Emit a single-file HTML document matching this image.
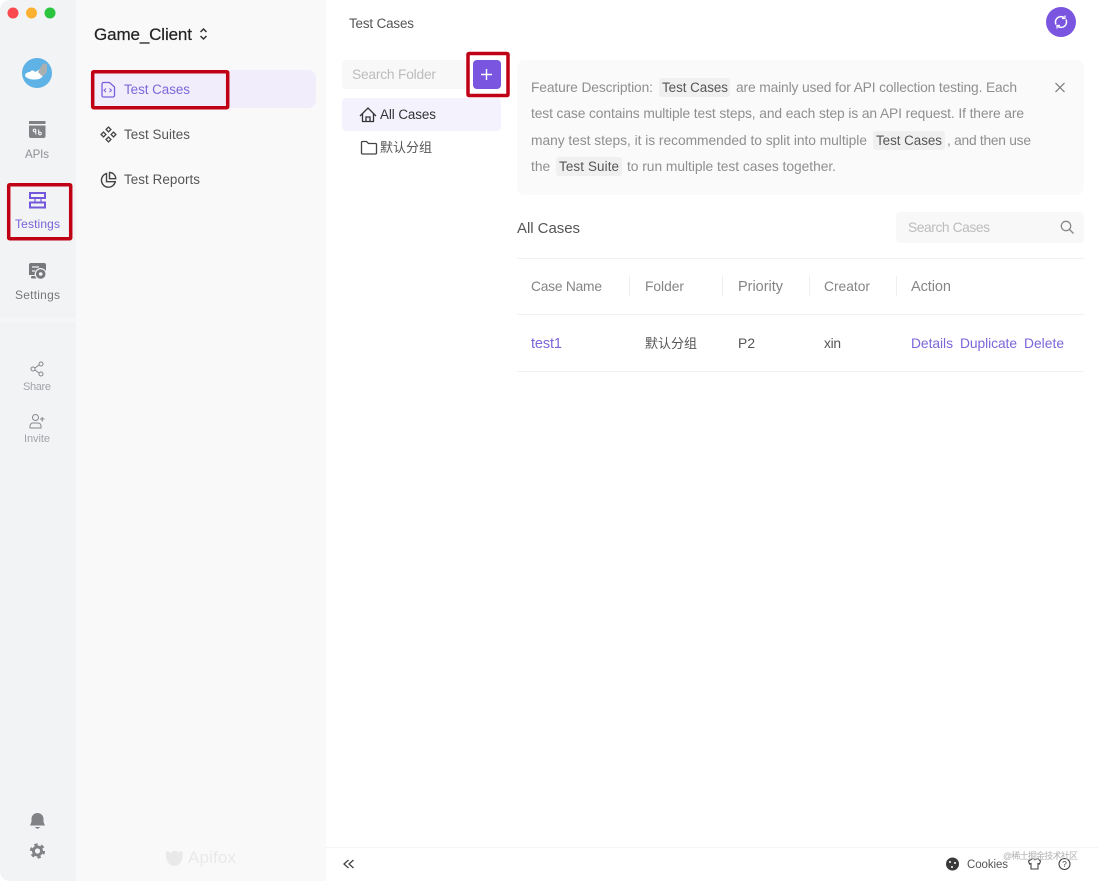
<!DOCTYPE html>
<html>
<head>
<meta charset="utf-8">
<style>
html,body{margin:0;padding:0;background:#fff;width:1098px;height:881px;overflow:hidden}
svg{display:block;filter:blur(0.35px)}
text{font-family:"Liberation Sans","Noto Sans CJK SC",sans-serif;font-size:13.8px}
.s{font-size:13.4px}
</style>
</head>
<body>
<svg width="1098" height="881" viewBox="0 0 1098 881" xmlns="http://www.w3.org/2000/svg">
<rect width="1098" height="881" fill="#fff"/>
<path d="M10 0H76V881H10a10 10 0 0 1-10-10V10A10 10 0 0 1 10 0Z" fill="#f1f3f5"/>
<rect x="0" y="318" width="76" height="4" fill="#f4f6f7"/>
<rect x="76" y="0" width="250" height="881" fill="#f9f9fa"/>

<circle cx="13" cy="13" r="5.5" fill="#fb4a4d"/>
<circle cx="31.5" cy="13" r="5.5" fill="#fcb02f"/>
<circle cx="50" cy="13" r="5.5" fill="#2ac43f"/>

<circle cx="37" cy="73" r="15" fill="#5fb2e6"/>
<path d="M25 76c0-3 3-4 5-4 1-2 4-2 5 0 2-1 4-2 6-4l3 3c1 3-2 7-5 8-4 1-11 1-14-3Z" fill="#fff"/>
<path d="M38 72l4-7c1-2 4-2 5 0v6c-1 3-3 5-5 5-1-1-2-2-4-4Z" fill="#a9aeb0"/>

<path d="M29 121h16.500v3H29Z" fill="#7f8184"/>
<path d="M29 125.500h16.500v10.500a2 2 0 0 1-2 2H31a2 2 0 0 1-2-2Z" fill="#7f8184"/>
<g fill="none" stroke="#f1f3f5" stroke-width="1.100">
<circle cx="34.500" cy="130.500" r="1.300"/><path d="M35.800 130.500v4"/>
<circle cx="40" cy="133.500" r="1.300"/><path d="M38.700 133.500v-4"/>
</g>
<text x="25" y="158" textLength="24" style="font-size:11.500px" fill="#8e9094">APIs</text>

<g fill="none" stroke="#7458dc" stroke-width="2">
<rect x="30" y="193" width="15" height="5"/>
<rect x="30" y="202.500" width="15" height="5"/>
<path d="M35 198v4.500M41 198v4.500" stroke-width="1.200"/>
</g>
<text x="15" y="228" textLength="45" style="font-size:12px" fill="#7a62d8">Testings</text>

<path d="M31 263h13a2 2 0 0 1 2 2v10h-17v-10a2 2 0 0 1 2-2Z" fill="#76787b"/>
<rect x="31" y="276" width="6" height="2.500" rx="1" fill="#76787b"/>
<circle cx="40.700" cy="274" r="6" fill="#f1f3f5"/>
<circle cx="40.700" cy="274" r="4.800" fill="#76787b"/><circle cx="40.700" cy="274" r="1.800" fill="#f1f3f5"/>
<path d="M32 267h7M32 271h3" stroke="#f1f3f5" stroke-width="1.300"/>
<text x="15" y="299" textLength="45" style="font-size:12px" fill="#76787b">Settings</text>

<g fill="none" stroke="#85878b" stroke-width="1">
<circle cx="41" cy="364" r="2"/><circle cx="33" cy="369" r="2"/><circle cx="41" cy="374" r="2"/>
<path d="M35 368l4-3M35 370l4 3"/>
</g>
<text x="23" y="390" textLength="28" style="font-size:11px" fill="#a2a4a8">Share</text>
<g fill="none" stroke="#85878b" stroke-width="1">
<circle cx="35.500" cy="417.500" r="3"/>
<path d="M30 428v-2a3 3 0 0 1 3-3h5a3 3 0 0 1 3 3v2Z"/>
<path d="M40 419h4.500M42.200 417v4.500"/>
</g>
<text x="24" y="442" textLength="26" style="font-size:11px" fill="#a2a4a8">Invite</text>

<path d="M37.500 813c3.500 0 6 2.500 6 6v3l1.500 3.500H30l1.500-3.500v-3c0-3.500 2.500-6 6-6Z" fill="#808286"/>
<path d="M34.500 827h6l-3 2Z" fill="#808286"/>
<circle cx="37.500" cy="851" r="5.500" fill="#808286"/>
<circle cx="37.500" cy="851" r="6.500" fill="none" stroke="#808286" stroke-width="2.200" stroke-dasharray="3.400 3.400"/>
<circle cx="37.500" cy="851" r="2.600" fill="#f1f3f5"/>

<text x="94" y="40" textLength="98" style="font-size:17px" fill="#222" stroke="#222" stroke-width="0.200">Game_Client</text>
<path d="M200.500 32l3-3 3 3M200.500 36l3 3 3-3" fill="none" stroke="#333" stroke-width="1.500"/>

<rect x="90" y="70" width="226" height="38" rx="8" fill="#f1edfb"/>
<path d="M103.500 82.500h6l5 4.500v8.500a1.500 1.500 0 0 1-1.500 1.500h-9.500a1.500 1.500 0 0 1-1.500-1.500v-11.500a1.500 1.500 0 0 1 1.500-1.500Z" fill="none" stroke="#7a5fdc" stroke-width="1.300"/>
<path d="M106 88.500l-2 1.800 2 1.800M109.500 88.500l2 1.800-2 1.800" fill="none" stroke="#7a5fdc" stroke-width="1"/>
<text class="s" x="124" y="94" textLength="66" fill="#7d66d9">Test Cases</text>

<g fill="none" stroke="#444" stroke-width="1.300">
<rect x="106.800" y="127.800" width="3.400" height="3.400" transform="rotate(45 108.500 129.500)"/>
<rect x="106.800" y="137.800" width="3.400" height="3.400" transform="rotate(45 108.500 139.500)"/>
<rect x="101.800" y="132.800" width="3.400" height="3.400" transform="rotate(45 103.500 134.500)"/>
<rect x="111.800" y="132.800" width="3.400" height="3.400" transform="rotate(45 113.500 134.500)"/>
</g>
<text class="s" x="124" y="139" textLength="66" fill="#555">Test Suites</text>

<g fill="none" stroke="#444" stroke-width="1.400">
<path d="M106.500 173.500a7 7 0 1 0 8.800 8.200h-8.800Z"/>
<path d="M109.500 172.500a6.200 6.200 0 0 1 6.200 6.200h-6.200Z"/>
</g>
<text class="s" x="124" y="184" textLength="76" fill="#555">Test Reports</text>

<text class="s" x="349" y="28" textLength="65" fill="#555">Test Cases</text>
<circle cx="1061" cy="22" r="15" fill="#7a55e0"/>
<g fill="none" stroke="#fff" stroke-width="1.500">
<path d="M1056 24.500a5.500 5.500 0 0 1 8-7"/><path d="M1066 19.500a5.500 5.500 0 0 1-8 7"/>
<path d="M1065 15.500v3h-3M1057 28.500v-3h3" stroke-width="1.200"/>
</g>

<rect x="342" y="60" width="126" height="29" rx="3" fill="#f8f8f8"/>
<text x="352" y="79" textLength="84" fill="#bcbcbc">Search Folder</text>
<rect x="473" y="60" width="28" height="29" rx="4" fill="#7a55e0"/>
<path d="M486.500 69v11M481 74.500h11" stroke="#fff" stroke-width="1.400"/>

<rect x="342" y="98" width="159" height="33" rx="4" fill="#f4f2fd"/>
<path d="M360 116l8-8 8 8M362.500 114v7.500h11V114M366 121.500v-4.500h4v4.500" fill="none" stroke="#333" stroke-width="1.300"/>
<text class="s" x="380" y="119" textLength="56" fill="#333">All Cases</text>
<path d="M361.500 142.500a1 1 0 0 1 1-1h4l2 2h7a1 1 0 0 1 1 1v8.500a1 1 0 0 1-1 1h-13a1 1 0 0 1-1-1Z" fill="none" stroke="#444" stroke-width="1.300"/>
<text x="380" y="152" textLength="52" style="font-size:13px" fill="#555">默认分组</text>

<rect x="517" y="60" width="567" height="135" rx="8" fill="#fafafa"/>
<g fill="#8f8f8f">
<text x="531" y="92" textLength="122">Feature Description:</text>
<text x="736" y="92" textLength="281">are mainly used for API collection testing. Each</text>
<text x="531" y="118" textLength="493">test case contains multiple test steps, and each step is an API request. If there are</text>
<text x="531" y="145" textLength="336">many test steps, it is recommended to split into multiple</text>
<text x="947" y="145" textLength="84">, and then use</text>
<text x="531" y="171">the</text>
<text x="627" y="171" textLength="209">to run multiple test cases together.</text>
</g>
<rect x="659" y="78" width="71" height="19" rx="3" fill="#f0f0f0"/>
<rect x="873" y="131" width="72" height="19" rx="3" fill="#f0f0f0"/>
<rect x="556" y="157" width="66" height="19" rx="3" fill="#f0f0f0"/>
<g fill="#555">
<text class="s" x="662" y="92" textLength="66">Test Cases</text>
<text class="s" x="876" y="145" textLength="66">Test Cases</text>
<text class="s" x="559" y="171" textLength="60">Test Suite</text>
</g>
<path d="M1055.500 83l9 9M1064.500 83l-9 9" stroke="#777" stroke-width="1.200"/>

<text x="517" y="233" textLength="63" style="font-size:15px" fill="#555">All Cases</text>
<rect x="896" y="212" width="188" height="31" rx="4" fill="#f8f8f8"/>
<text x="908" y="232" textLength="82" fill="#bcbcbc">Search Cases</text>
<circle cx="1066" cy="226" r="4.700" fill="none" stroke="#888" stroke-width="1.300"/>
<path d="M1069.500 229.500l4 4" stroke="#888" stroke-width="1.300"/>

<g fill="#f2f2f2">
<rect x="517" y="258" width="567" height="1"/>
<rect x="517" y="314" width="567" height="1"/>
<rect x="517" y="371" width="567" height="1"/>
</g>
<g fill="#efefef">
<rect x="629" y="276" width="1" height="20"/>
<rect x="722" y="276" width="1" height="20"/>
<rect x="809" y="276" width="1" height="20"/>
<rect x="896" y="276" width="1" height="20"/>
</g>
<g fill="#858585">
<text x="531" y="291" textLength="71">Case Name</text>
<text x="645" y="291" textLength="39">Folder</text>
<text x="738" y="291" textLength="45" style="font-size:14.500px">Priority</text>
<text x="824" y="291" textLength="46">Creator</text>
<text x="911" y="291" textLength="40" style="font-size:14.500px">Action</text>
</g>
<text x="531" y="348" textLength="31" style="font-size:14.500px" fill="#7d66d9">test1</text>
<text x="645" y="348" textLength="52" style="font-size:13px" fill="#555">默认分组</text>
<text x="738" y="348" textLength="17" fill="#555">P2</text>
<text x="824" y="348" textLength="17" fill="#555">xin</text>
<g fill="#7d66d9">
<text x="911" y="348" textLength="42">Details</text>
<text x="960" y="348" textLength="57">Duplicate</text>
<text x="1024" y="348" textLength="40">Delete</text>
</g>

<rect x="326" y="847" width="772" height="1" fill="#f5f5f5"/>
<path d="M348.500 860l-4.500 4 4.500 4M353.500 860l-4.500 4 4.500 4" fill="none" stroke="#444" stroke-width="1.300"/>
<path d="M166.500 851c1 0 3 .5 4 2 3-3 7-3 8 0 1-1.500 2-2 4-2 1 6-1 15-8 15S164.500 857 166.500 851Z" fill="#e9e9ea"/>
<text x="188" y="863" textLength="48" style="font-size:17px" fill="#e9e9ea">Apifox</text>

<circle cx="952.500" cy="864" r="6.500" fill="#3a3a3a"/>
<circle cx="950" cy="862" r="1" fill="#fff"/><circle cx="955" cy="863" r="1" fill="#fff"/><circle cx="952" cy="867" r="1" fill="#fff"/>
<text x="967" y="868" textLength="41" style="font-size:11.500px" fill="#555">Cookies</text>
<path d="M1032 859h2c.5 1 1.500 1 2 0h2l2.500 2-1 3-1.500-.5V869h-7v-5.500l-1.500.5-1-3Z" fill="none" stroke="#444" stroke-width="1.100"/>
<circle cx="1064.500" cy="864" r="5.500" fill="none" stroke="#444" stroke-width="1.100"/>
<text x="1064.500" y="867" text-anchor="middle" style="font-size:8.500px" fill="#444">?</text>
<text x="1003" y="859" textLength="75" style="font-size:9px" fill="#b0b0b0">@稀土掘金技术社区</text>

<g fill="none" stroke="#c00015" stroke-width="3.500">
<rect x="92.700" y="71.700" width="135" height="36" rx="1"/>
<rect x="8.700" y="184.700" width="62" height="54" rx="1"/>
<rect x="468" y="53.500" width="40" height="42" rx="1"/>
</g>
</svg>
</body>
</html>
